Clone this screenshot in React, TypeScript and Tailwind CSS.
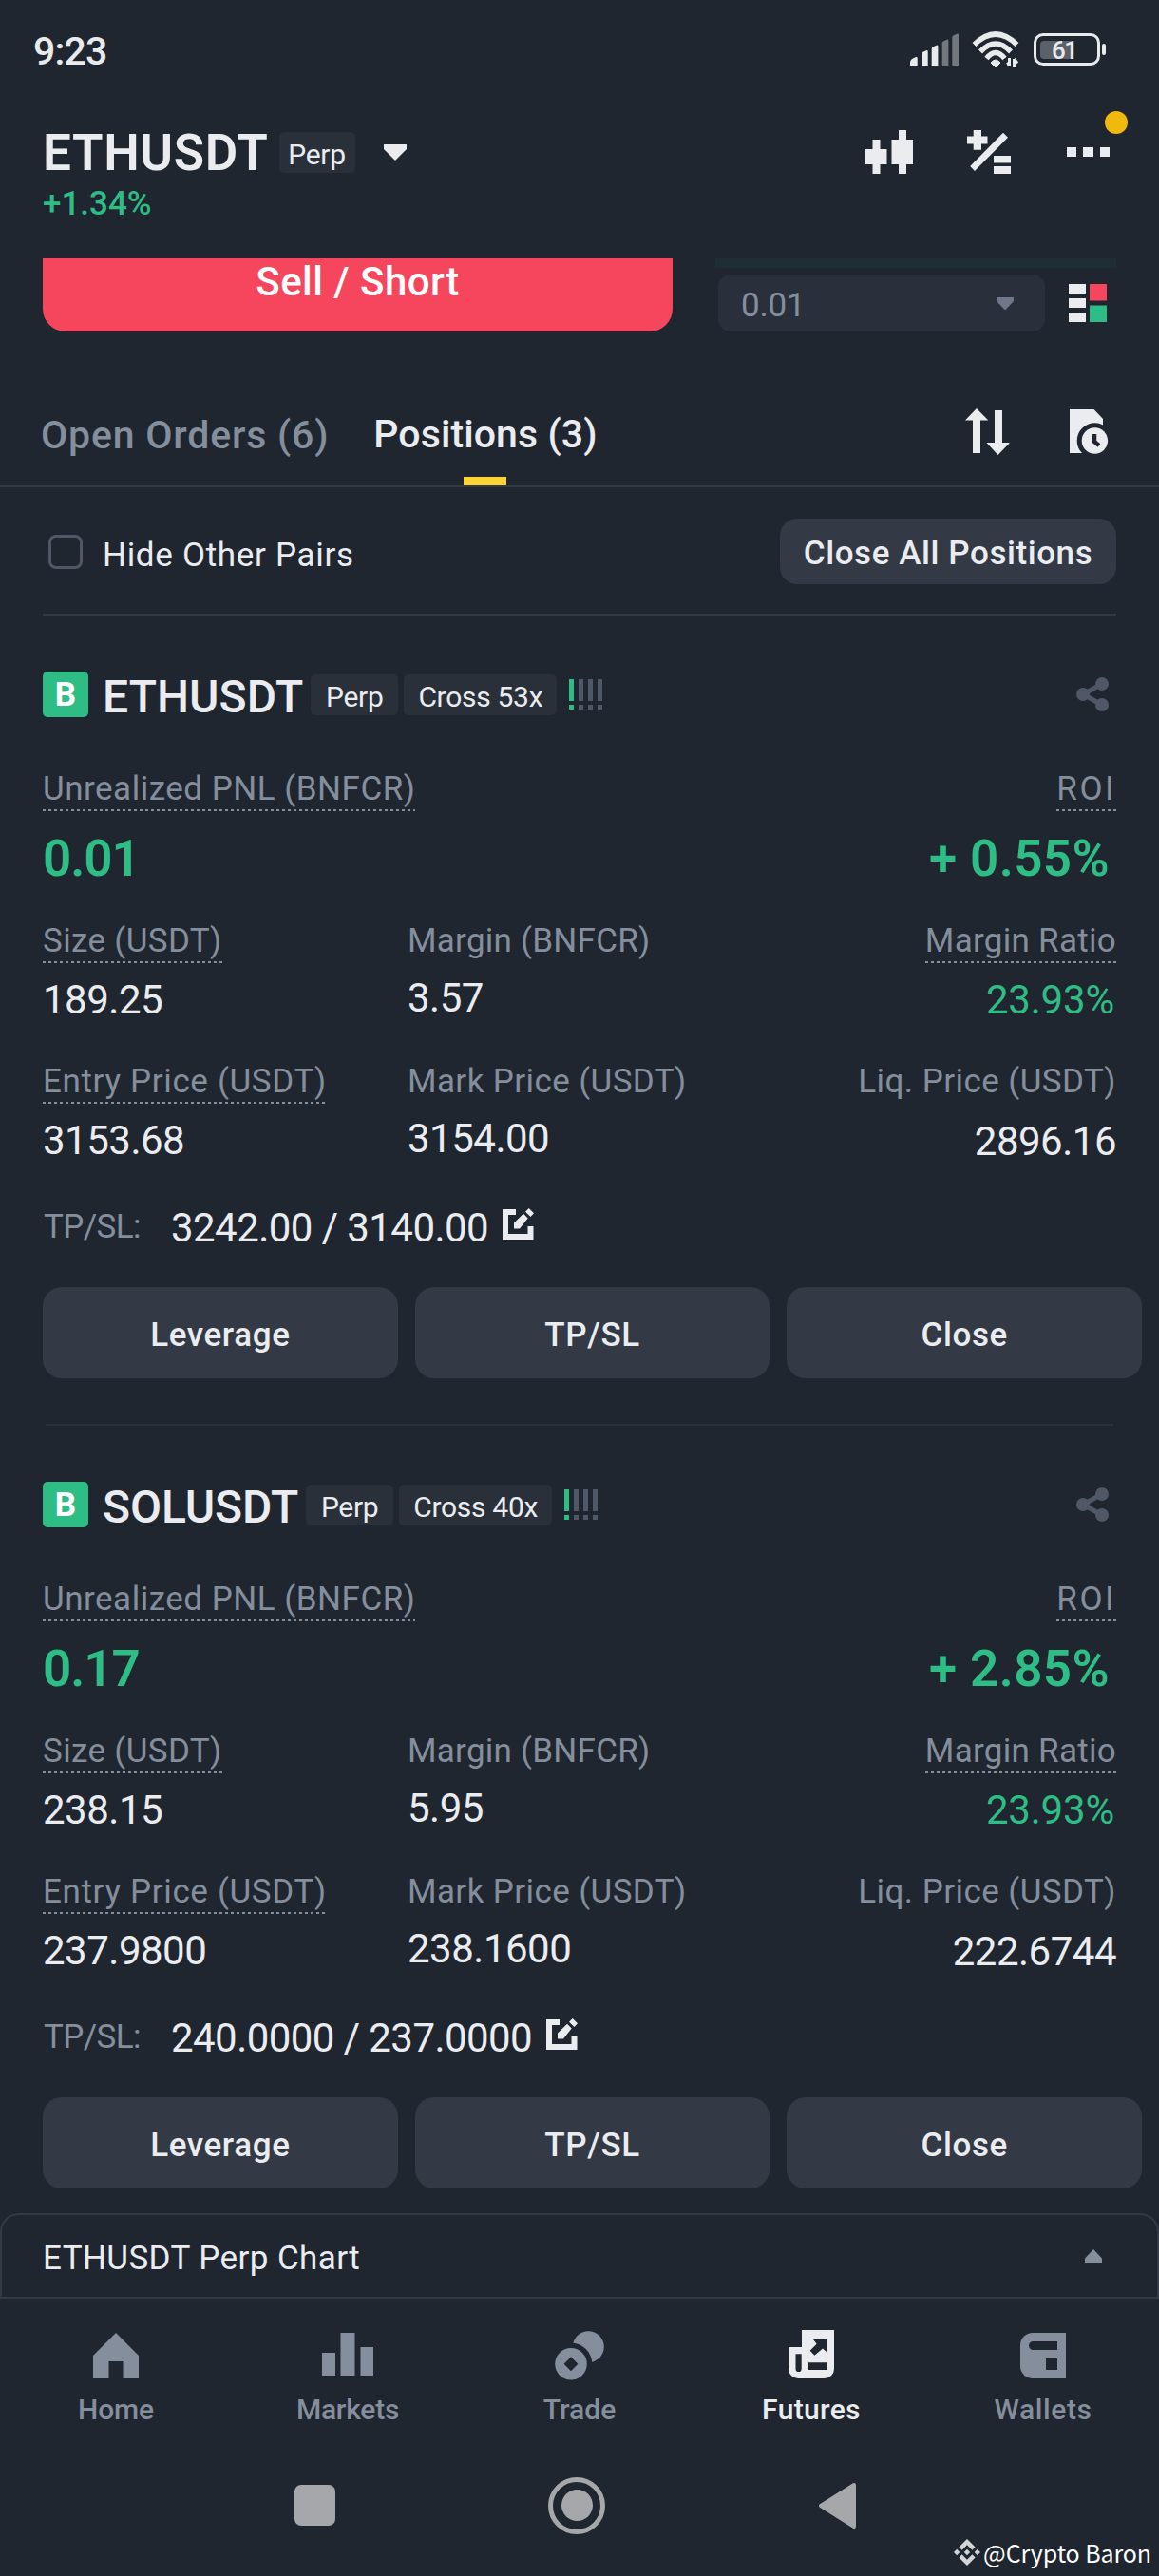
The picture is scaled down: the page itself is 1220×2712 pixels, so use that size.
import type { ReactNode } from 'react';
import clsx from 'clsx';
import { SiBinance } from 'react-icons/si';

type Position = {
  symbol: string;
  symbolTracking: string;
  leverage: string;
  pnl: string;
  roi: string;
  size: string;
  margin: string;
  marginRatio: string;
  entryPrice: string;
  markPrice: string;
  liqPrice: string;
  tpsl: string;
};

const positions: Position[] = [
  {
    symbol: 'ETHUSDT', symbolTracking: 'tracking-[0.07px]', leverage: 'Cross 53x',
    pnl: '0.01', roi: '+ 0.55%', size: '189.25', margin: '3.57', marginRatio: '23.93%',
    entryPrice: '3153.68', markPrice: '3154.00', liqPrice: '2896.16', tpsl: '3242.00 / 3140.00',
  },
  {
    symbol: 'SOLUSDT', symbolTracking: 'tracking-[-0.12px]', leverage: 'Cross 40x',
    pnl: '0.17', roi: '+ 2.85%', size: '238.15', margin: '5.95', marginRatio: '23.93%',
    entryPrice: '237.9800', markPrice: '238.1600', liqPrice: '222.6744', tpsl: '240.0000 / 237.0000',
  },
];

const navItems = [
  { label: 'Home', icon: HomeIcon, tracking: 'tracking-[-0.15px]' },
  { label: 'Markets', icon: MarketsIcon, tracking: 'tracking-[-0.24px]' },
  { label: 'Trade', icon: TradeIcon, tracking: 'tracking-normal' },
  { label: 'Futures', icon: FuturesIcon, tracking: 'tracking-[0.34px]', active: true },
  { label: 'Wallets', icon: WalletsIcon, tracking: 'tracking-[0.59px]' },
];

function HomeIcon() {
  return (
    <svg width="60" height="60" fill="currentColor">
      <path d="M30 6 54 30v24H37.5V36h-15v18H6V30z" />
    </svg>
  );
}

function MarketsIcon() {
  return (
    <svg width="60" height="60" fill="currentColor">
      <path d="M3 27h14v24H3zM22.5 6h15v45h-15zM43.5 21h13.5v30H43.5z" />
    </svg>
  );
}

function TradeIcon() {
  return (
    <svg width="60" height="60" fill="currentColor">
      <circle cx="39.3" cy="20.7" r="16.5" />
      <circle cx="21" cy="38.8" r="22.3" className="fill-[#1f262f]" />
      <circle cx="21" cy="38.8" r="16.8" />
      <path d="m21 31.3 7.4 7.5-7.4 7.5-7.4-7.5z" className="fill-[#1f262f]" />
    </svg>
  );
}

function FuturesIcon() {
  return (
    <svg width="60" height="60" fill="currentColor">
      <path d="M20 3h34v41a10 10 0 0 1-10 10H16A10 10 0 0 1 6 44V21h14z" />
      <path
        d="M13.5 28.3h6.2V44a3.1 3.1 0 0 1-6.2 0zM27 37.3h19.7V45H27zM31.3 12h15.4v14.8L42 22.4l-8.6 7.4-4.8-5 7-7.1z"
        className="fill-[#1f262f]"
      />
    </svg>
  );
}

function WalletsIcon() {
  return (
    <svg width="60" height="60" fill="currentColor">
      <path d="M19 6h35v48H19A13 13 0 0 1 6 41V19A13 13 0 0 1 19 6z" />
      <path d="M19.5 15H45v9H19.5a4.5 4.5 0 0 1 0-9zM33 33h12v12H33z" className="fill-[#1f262f]" />
    </svg>
  );
}

function SignalIcon() {
  return (
    <svg width="51" height="34" fill="#e9eaec">
      <path d="M0 34v-3q0-3 3-4.500l3-1.500q1.700-.5 1.700 1V34zM12 34V22q0-1.500 1.500-2.200l3.500-1.600q1.700-.6 1.700 1V34zM22.700 34V16.500q0-1.500 1.500-2.200l3.500-1.600q1.700-.6 1.700 1V34z" />
      <path
        d="M33.700 34V10.500q0-1.500 1.500-2.200l3.500-1.600q1.700-.6 1.700 1V34zM44.300 34V4.500q0-1.500 1.500-2.200L49.300.7q1.700-.6 1.700 1V34z"
        className="fill-[#73777e]"
      />
    </svg>
  );
}

function WifiIcon() {
  return (
    <svg width="51" height="39" fill="none" stroke="#e9eaec">
      <path d="M2.500 14q22.500-22 45 0M9 21.500q16-17 32 0M15.500 28.500q9.500-12 19 0" strokeWidth="5.500" />
      <path d="M20 33q5-6 10 0l-5 5z" fill="#e9eaec" strokeWidth="1" strokeLinejoin="round" />
      <path d="M39.500 28v9M37.500 32.500l2 4M44.500 38v-9M44.500 29l3.500 4.500" strokeWidth="3" />
    </svg>
  );
}

function BatteryIcon() {
  return (
    <div className="flex items-center gap-[2px]">
      <div className="flex h-[34px] w-[70px] items-center rounded-[10px] border-[3.5px] border-[#e9eaec] px-[4px]">
        <div className="flex h-[19px] w-[34px] items-center rounded-l-[4px] bg-[#5b606a]">
          <span className="pl-[12px] pt-[2px] text-[26px] font-medium leading-none tracking-[-1.5px] text-[#e9eaec]">61</span>
        </div>
      </div>
      <div className="h-[12px] w-[4px] rounded-full bg-[#e9eaec]" />
    </div>
  );
}

function Tag({ children, className }: { children: ReactNode; className?: string }) {
  return (
    <span className={clsx('h-[43px] rounded-[5px] bg-[#29303a] text-center text-[30px] leading-[47px] tracking-[-0.3px]', className)}>
      {children}
    </span>
  );
}

function Label({ children, underlined, className }: { children: ReactNode; underlined?: boolean; className?: string }) {
  return (
    <div className={clsx('w-fit pt-[2px] text-[35px] leading-[43px] text-[#848e9c]', className)}>
      {children}
      <div className={clsx('h-[2px]', underlined && 'bg-[repeating-linear-gradient(90deg,#848e9c_0_3px,transparent_3px_6px)]')} />
    </div>
  );
}

function PositionCard({ position: p, last }: { position: Position; last?: boolean }) {
  return (
    <section className="px-[45px] pt-[59px]">
      <div className="flex h-12 items-center">
        <span className="size-12 rounded-[5px] bg-[#2ebd85] text-center text-[35px] font-bold leading-[49px] text-white">B</span>
        <h2 className={clsx('ml-[15px] pt-[6px] text-[48px] font-medium leading-[48px]', p.symbolTracking)}>{p.symbol}</h2>
        <Tag className="ml-[8px] w-[92px]">Perp</Tag>
        <Tag className="ml-[6px] w-[161px]">{p.leverage}</Tag>
        <div className="ml-[13px] flex gap-[5px]">
          {[0, 1, 2, 3].map((i) => (
            <div key={i} className={clsx('flex flex-col gap-1', i === 0 ? 'text-[#2ebd85]' : 'text-[#4f5866]')}>
              <div className="h-[23px] w-[5px] bg-current" />
              <div className="size-[5px] bg-current" />
            </div>
          ))}
        </div>
        <svg className="ml-auto mr-2 text-[#4f5866]" width="34" height="36" fill="currentColor">
          <path d="M27 7 7 18l20 11" fill="none" stroke="currentColor" strokeWidth="5" />
          <circle cx="27" cy="7" r="7" />
          <circle cx="7" cy="18" r="7" />
          <circle cx="27" cy="29" r="7" />
        </svg>
      </div>

      <div className="mt-[52px] flex justify-between">
        <div>
          <Label underlined className="tracking-[0.5px]">Unrealized PNL (BNFCR)</Label>
          <p className="text-[53px] font-semibold leading-[100px] tracking-[-1px] text-[#2ebd85]">{p.pnl}</p>
        </div>
        <div className="flex flex-col items-end">
          <Label underlined className="tracking-[2.5px]">ROI</Label>
          <p className="pr-[7px] text-[53px] font-semibold leading-[100px] tracking-[0.4px] text-[#2ebd85]">{p.roi}</p>
        </div>
      </div>

      <div className="mt-[13px] grid grid-cols-[384px_1fr_auto] text-[42px] leading-[78px] tracking-[-0.5px]">
        <div>
          <Label underlined className="tracking-[0.35px]">Size (USDT)</Label>
          <p>{p.size}</p>
        </div>
        <div>
          <Label className="tracking-[0.25px]">Margin (BNFCR)</Label>
          <p className="leading-[74px]">{p.margin}</p>
        </div>
        <div className="flex flex-col items-end">
          <Label underlined className="tracking-[0.28px]">Margin Ratio</Label>
          <p className="pr-[2px] tracking-[-0.2px] text-[#2ebd85]">{p.marginRatio}</p>
        </div>
      </div>

      <div className="mt-[23px] grid grid-cols-[384px_1fr_auto] text-[42px] leading-[78px] tracking-[-0.5px]">
        <div>
          <Label underlined className="tracking-[0.65px]">Entry Price (USDT)</Label>
          <p>{p.entryPrice}</p>
        </div>
        <div>
          <Label className="tracking-[0.39px]">Mark Price (USDT)</Label>
          <p className="leading-[74px]">{p.markPrice}</p>
        </div>
        <div className="flex flex-col items-end">
          <Label className="tracking-[0.44px]">Liq. Price (USDT)</Label>
          <p className="leading-[80px]">{p.liqPrice}</p>
        </div>
      </div>

      <div className="-mt-1 flex h-[106px] items-center pt-[2px]">
        <span className="w-[135px] pl-px text-[35px] tracking-[-0.6px] text-[#848e9c]">TP/SL:</span>
        <span className="text-[42px] tracking-[-0.56px]">{p.tpsl}</span>
        <svg className="mb-[7px] ml-[15px]" width="33" height="33" fill="currentColor">
          <path d="M0 1h14v6H6v20h20.500v-8h6v14H0z" />
          <path d="M12 21.500v-6L22 5.700l4.700 4.700-8.700 11.100zM24 3.700 27.700 0 33 5.300 29.500 9z" />
        </svg>
      </div>

      <div className="-mr-[27px] mt-[11px] grid grid-cols-3 gap-[18px]">
        {['Leverage', 'TP/SL', 'Close'].map((action) => (
          <button key={action} className="h-24 rounded-[20px] bg-[#333a45] pt-[7px] text-[35px] font-medium tracking-[0.6px]">
            {action}
          </button>
        ))}
      </div>

      {last ? <div className="h-[26px]" /> : <div className="mx-[3px] mt-12 h-[2px] bg-[#2a313b]" />}
    </section>
  );
}

export default function App() {
  return (
    <div className="relative h-[2712px] w-[1220px] overflow-hidden bg-[#1f262f] font-['Roboto',sans-serif] text-[#eaecef]">
      {/* Status bar */}
      <div className="flex h-[108px] items-center pl-[35px] pr-14">
        <span className="pt-[2px] text-[41px] font-medium tracking-[-0.8px] text-[#e9eaec]">9:23</span>
        <div className="ml-auto flex items-center gap-[14px] pb-[4px]">
          <SignalIcon />
          <WifiIcon />
          <BatteryIcon />
        </div>
      </div>

      {/* Header */}
      <header className="h-[164px] pl-[45px] pr-[52px] pt-[30px]">
        <div className="flex h-11 items-center">
          <h1 className="pt-[3px] text-[53px] font-semibold leading-none tracking-[0.6px]">ETHUSDT</h1>
          <Tag className="ml-[11px] w-20">Perp</Tag>
          <svg className="ml-[30px]" width="24" height="17" fill="currentColor">
            <path d="M0 0h24v5L12 17 0 5z" />
          </svg>
          <svg className="ml-auto" width="50" height="46" fill="currentColor">
            <path d="M7.500 10h8v10h7v16h-7v10h-8V36H0V20h7.500zM35 0h8v10h7v26h-7v10h-8V36h-7.500V10H35z" />
          </svg>
          <svg className="ml-[57px]" width="46" height="46" fill="currentColor">
            <path d="M6.700 0H15v6.500h6.500v8H15v6.200H6.700v-6.200H0v-8h6.700zM38 2.700l5 5L8 43l-4.800-5zM28 27h18v7.500H28zM28 38h18v8H28z" />
          </svg>
          <div className="relative ml-[59px] flex gap-[7px]">
            <div className="size-[10.500px] bg-current" />
            <div className="size-[10.500px] bg-current" />
            <div className="size-[10.500px] bg-current" />
            <div className="absolute -right-[19px] -top-[38px] size-6 rounded-full bg-[#f0b90b]" />
          </div>
        </div>
        <p className="pt-px text-[35px] font-medium leading-[64px] text-[#2ebd85]">+1.34%</p>
      </header>

      {/* Order form, scrolled under the header */}
      <div className="flex h-[77px] pl-[45px] pr-[45px]">
        <div className="w-[663px] rounded-b-[24px] bg-[#f6465d] text-center text-[42px] font-medium leading-[50px] tracking-[0.45px] text-white">
          Sell / Short
        </div>
        <div className="ml-[45px] flex-1">
          <div className="h-[10px] bg-[#1f2d34]" />
          <div className="mt-[7px] flex items-center pl-[3px]">
            <div className="flex h-[60px] w-[344px] items-center justify-between rounded-[13px] bg-[#2a303b] pl-[24px] pr-[33px] text-[#848e9c]">
              <span className="pt-[6px] text-[35px] tracking-[-0.2px]">0.01</span>
              <svg className="text-[#6f788a]" width="18" height="13" fill="currentColor">
                <path d="M0 0h18v4l-9 9.500L0 4z" />
              </svg>
            </div>
            <svg className="ml-[25px]" width="40" height="40">
              <path d="M0 0h18v10H0zM0 15h18v10H0zM0 30h18v10H0z" fill="#eaecef" />
              <path d="M22 0h18v17.500H22z" fill="#f6465d" />
              <path d="M22 22.500h18V40H22z" fill="#2ebd85" />
            </svg>
          </div>
        </div>
      </div>

      {/* Tabs */}
      <div className="mt-[62px] flex h-[102px] items-start border-b-2 border-[#333a45] pl-[43px] pr-[54px] text-[41px] font-medium">
        <span className="pt-[2px] leading-[91px] tracking-[0.8px] text-[#848e9c]">Open Orders (6)</span>
        <div className="ml-[47px] flex flex-col items-center">
          <span className="pt-[2px] leading-[89px] tracking-[0.1px]">Positions (3)</span>
          <div className="h-[9px] w-[45px] bg-[#fcd535]" />
        </div>
        <svg className="ml-auto mt-[19px]" width="47" height="49" fill="currentColor">
          <path d="M12 0l12.300 12.500H16V47H8V12.500H0zM31 2h8v34h8L34.500 49 22.500 36H31z" />
        </svg>
        <svg className="ml-[63px] mt-[20px]" width="40" height="48" fill="currentColor">
          <path d="M0 0h25.500L35 10v20H14v16H0z" />
          <circle cx="26.400" cy="33" r="18.700" className="fill-[#1f262f]" />
          <circle cx="26.400" cy="33" r="13.700" />
          <path d="M26 26v8l5 4" fill="none" stroke="#1f262f" strokeWidth="4.500" />
        </svg>
      </div>

      {/* Filter */}
      <div className="mx-[45px] flex h-[135px] items-start border-b-2 border-[#333a45] pt-[33px]">
        <div className="ml-[6px] mt-[17px] size-9 rounded-[8px] border-[3px] border-[#4f5866]" />
        <span className="ml-[21px] text-[35px] leading-[77px] tracking-[0.69px]">Hide Other Pairs</span>
        <button className="ml-auto h-[69px] w-[354px] rounded-[18px] bg-[#333a45] pt-[6px] text-[35px] font-medium tracking-[0.57px]">
          Close All Positions
        </button>
      </div>

      {positions.map((p, i) => (
        <PositionCard key={p.symbol} position={p} last={i === positions.length - 1} />
      ))}

      {/* Chart drawer */}
      <div className="border-b-2 border-[#333a45]">
        <div className="flex h-[88px] items-center justify-between rounded-t-[20px] border-x-2 border-t-2 border-[#333a45] pl-[43px] pr-[58px]">
          <span className="pt-[6px] text-[35px] tracking-[0.41px]">ETHUSDT Perp Chart</span>
          <svg className="text-[#848e9c]" width="18" height="14" fill="currentColor">
            <path d="M0 14h18v-4.500L9 0 0 9.500z" />
          </svg>
        </div>
      </div>

      {/* Bottom navigation */}
      <nav className="grid h-[143px] grid-cols-5 pt-[30px]">
        {navItems.map(({ label, icon: Icon, tracking, active }) => (
          <div key={label} className={clsx('flex flex-col items-center', active ? 'text-[#eaecef]' : 'text-[#848e9c]')}>
            <Icon />
            <span className={clsx('text-[30px] font-medium leading-[54px]', tracking)}>{label}</span>
          </div>
        ))}
      </nav>

      {/* System buttons */}
      <div className="flex h-[149px] items-center pl-[310px] text-[#a6a7aa]">
        <div className="size-[43px] rounded-[7px] bg-current" />
        <div className="ml-[224px] flex size-[60px] items-center justify-center rounded-full border-[5.500px] border-current">
          <div className="size-[33px] rounded-full bg-current" />
        </div>
        <svg className="ml-[224px]" width="41" height="50" fill="currentColor" stroke="currentColor">
          <path d="M38 3v44L3 25z" strokeWidth="4" strokeLinejoin="round" />
        </svg>
      </div>

      <div className="absolute bottom-[5px] right-[8px] flex items-center gap-[3px] text-white">
        <SiBinance size={28} className="text-[#d3d4d6]" />
        <span className="font-['Noto_Sans_CJK_SC','Noto_Sans',sans-serif] text-[25px] leading-[40px] tracking-[-0.1px]">@Crypto Baron</span>
      </div>
    </div>
  );
}
